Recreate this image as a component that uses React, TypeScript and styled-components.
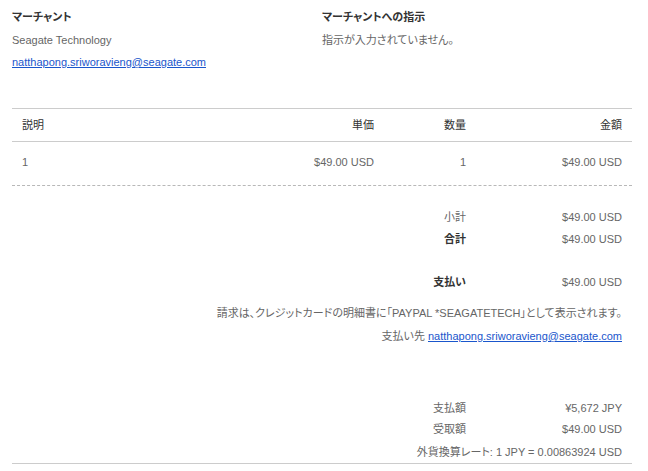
import React from "react";
import styled, { createGlobalStyle } from "styled-components";

const Global = createGlobalStyle`
  html, body { margin: 0; padding: 0; background: #fff; }
  body {
    font-family: "Liberation Sans", Arial, "Noto Sans CJK JP", sans-serif;
    font-size: 11px;
    color: #666;
    font-feature-settings: "palt";
  }
`;

const Page = styled.div`
  width: 620px;
  padding: 6px 16px 0 12px;
`;

const TopGrid = styled.div`
  display: grid;
  grid-template-columns: 310px 310px;
`;

const Block = styled.div`
  display: flex;
  flex-direction: column;
  gap: 0.5px;
`;

const Heading = styled.div`
  font-weight: bold;
  color: #333;
  line-height: 22px;
`;

const Text = styled.div`
  line-height: 22px;
  color: #666;
`;

const Link = styled.a`
  color: #1a56cc;
  text-decoration: underline;
`;

const ItemTable = styled.div`
  margin-top: 35px;
  border-top: 1px solid #cccccc;
  border-bottom: 1px dashed #b8b8b8;
`;

const ItemRow = styled.div<{ $head?: boolean }>`
  display: grid;
  grid-template-columns: 1fr 134px 92px 156px;
  height: ${(p) => (p.$head ? "33px" : "43px")};
  align-items: ${(p) => (p.$head ? "center" : "start")};
  padding-top: ${(p) => (p.$head ? "0" : "9px")};
  box-sizing: border-box;
  line-height: 22px;
  color: ${(p) => (p.$head ? "#333" : "#666")};
  border-bottom: ${(p) => (p.$head ? "1px solid #cccccc" : "none")};
`;

const Cell = styled.div<{ $right?: boolean }>`
  padding: 0 10px;
  text-align: ${(p) => (p.$right ? "right" : "left")};
`;

const Summary = styled.div<{ $mt: number }>`
  margin-top: ${(p) => p.$mt}px;
  display: flex;
  flex-direction: column;
`;

const SumRow = styled.div<{ $h?: number }>`
  display: grid;
  grid-template-columns: 1fr 156px;
  line-height: ${(p) => p.$h ?? 22}px;
`;

const SumLabel = styled.div<{ $bold?: boolean }>`
  text-align: right;
  padding-right: 10px;
  font-weight: ${(p) => (p.$bold ? "bold" : "normal")};
  color: ${(p) => (p.$bold ? "#333" : "#666")};
`;

const SumValue = styled.div`
  text-align: right;
  padding-right: 10px;
  color: #666;
`;

const Note = styled.div<{ $mt?: number }>`
  text-align: right;
  padding-right: 10px;
  line-height: 22px;
  margin-top: ${(p) => p.$mt ?? 0}px;
  color: #666;
`;

const Footer = styled.div`
  margin-top: 50px;
  border-bottom: 1px solid #cccccc;
`;

export default function App() {
  const email = "natthapong.sriworavieng@seagate.com";
  return (
    <>
      <Global />
      <Page>
        <TopGrid>
          <Block>
            <Heading>マーチャント</Heading>
            <Text>Seagate Technology</Text>
            <Text>
              <Link href="#">{email}</Link>
            </Text>
          </Block>
          <Block>
            <Heading>マーチャントへの指示</Heading>
            <Text>指示が入力されていません。</Text>
          </Block>
        </TopGrid>

        <ItemTable>
          <ItemRow $head>
            <Cell>説明</Cell>
            <Cell $right>単価</Cell>
            <Cell $right>数量</Cell>
            <Cell $right>金額</Cell>
          </ItemRow>
          <ItemRow>
            <Cell>1</Cell>
            <Cell $right>$49.00 USD</Cell>
            <Cell $right>1</Cell>
            <Cell $right>$49.00 USD</Cell>
          </ItemRow>
        </ItemTable>

        <Summary $mt={20}>
          <SumRow>
            <SumLabel>小計</SumLabel>
            <SumValue>$49.00 USD</SumValue>
          </SumRow>
          <SumRow>
            <SumLabel $bold>合計</SumLabel>
            <SumValue>$49.00 USD</SumValue>
          </SumRow>
        </Summary>

        <Summary $mt={21}>
          <SumRow>
            <SumLabel $bold>支払い</SumLabel>
            <SumValue>$49.00 USD</SumValue>
          </SumRow>
        </Summary>

        <Summary $mt={9}>
          <Note>請求は、クレジットカードの明細書に「PAYPAL *SEAGATETECH」として表示されます。</Note>
          <Note $mt={1}>
            支払い先 <Link href="#">{email}</Link>
          </Note>
        </Summary>

        <Footer>
          <SumRow>
            <SumLabel>支払額</SumLabel>
            <SumValue>¥5,672 JPY</SumValue>
          </SumRow>
          <SumRow $h={21}>
            <SumLabel>受取額</SumLabel>
            <SumValue>$49.00 USD</SumValue>
          </SumRow>
          <Note $mt={1}>外貨換算レート: 1 JPY = 0.00863924 USD</Note>
        </Footer>
      </Page>
    </>
  );
}
